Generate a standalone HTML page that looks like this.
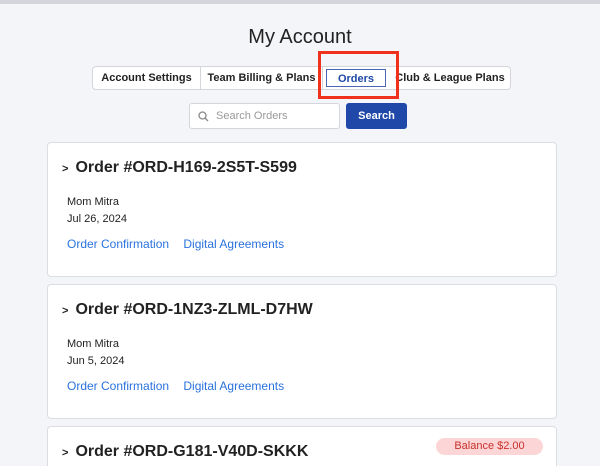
<!DOCTYPE html>
<html style="width:600px;height:466px;overflow:hidden"><head><style>
*{box-sizing:border-box;margin:0;padding:0}
body{width:600px;height:466px;overflow:hidden;background:#f4f5f9;font-family:"Liberation Sans",sans-serif;position:relative;color:#222}
.top{position:absolute;left:0;top:0;width:600px;height:4px;background:#d4d5da}
h1{position:absolute;top:26px;width:600px;text-align:center;font-size:20px;font-weight:normal;color:#222}
.tabs{position:absolute;left:92px;top:66px;width:419px;height:24px;background:#fff;border:1px solid #d4d6dc;border-radius:4px;font-size:11px;font-weight:bold}
.tab{position:absolute;top:0;height:22px;line-height:22px;text-align:center}
.red{position:absolute;left:318px;top:51px;width:81px;height:48px;border:3px solid #f0311c}
.inp{position:absolute;left:189px;top:103px;width:151px;height:26px;background:#fff;border:1px solid #d4d6dc;border-radius:3px;font-size:11px;color:#999;line-height:24px;padding-left:26px}
.btn{position:absolute;left:346px;top:103px;width:61px;height:26px;background:#1f48a8;border-radius:3px;color:#fff;font-size:11px;font-weight:bold;text-align:center;line-height:26px}
.card{position:absolute;left:47px;width:510px;height:135px;background:#fff;border:1px solid #dcdde2;border-radius:4px}
.t{position:absolute;left:14px;top:16px;font-size:16px;font-weight:bold;color:#222}
.t span{font-size:11px;margin-right:7px}
.n{position:absolute;left:19px;top:51px;font-size:11px;line-height:17px}
.l{position:absolute;left:19px;top:94px;font-size:12px;color:#2a72de}
.l b{font-weight:normal;margin-right:11px}
.badge{position:absolute;left:388px;top:11px;width:107px;height:17px;border-radius:9px;background:#fcd6d6;color:#c9302c;font-size:11px;text-align:center;line-height:17px}
</style></head><body>
<div class="top"></div>
<h1>My Account</h1>
<div class="tabs">
<div class="tab" style="left:0;width:108px;border-right:1px solid #d4d6dc">Account Settings</div>
<div class="tab" style="left:108px;width:122px;border-right:1px solid #d4d6dc">Team Billing &amp; Plans</div>
<div class="tab" style="left:233px;top:2px;width:60px;height:18px;line-height:18px;border:1px solid #4a65b5;color:#1f48a8">Orders</div>
<div class="tab" style="left:295px;width:124px">Club &amp; League Plans</div>
</div>
<div class="red"></div>
<div class="inp"><svg style="position:absolute;left:8px;top:7px" width="11" height="11" viewBox="0 0 11 11"><circle cx="4.5" cy="4.5" r="3.5" fill="none" stroke="#888" stroke-width="1.3"/><path d="M7 7l3 3" stroke="#888" stroke-width="1.3"/></svg>Search Orders</div>
<div class="btn">Search</div>
<div class="card" style="top:142px"><div class="t"><span>&gt;</span>Order #ORD-H169-2S5T-S599</div><div class="n">Mom Mitra<br>Jul 26, 2024</div><div class="l"><b>Order Confirmation</b> Digital Agreements</div></div>
<div class="card" style="top:284px"><div class="t"><span>&gt;</span>Order #ORD-1NZ3-ZLML-D7HW</div><div class="n">Mom Mitra<br>Jun 5, 2024</div><div class="l"><b>Order Confirmation</b> Digital Agreements</div></div>
<div class="card" style="top:426px;height:40px;border-bottom:none;border-radius:4px 4px 0 0"><div class="t"><span>&gt;</span>Order #ORD-G181-V40D-SKKK</div><div class="badge">Balance $2.00</div></div>
</body></html>
